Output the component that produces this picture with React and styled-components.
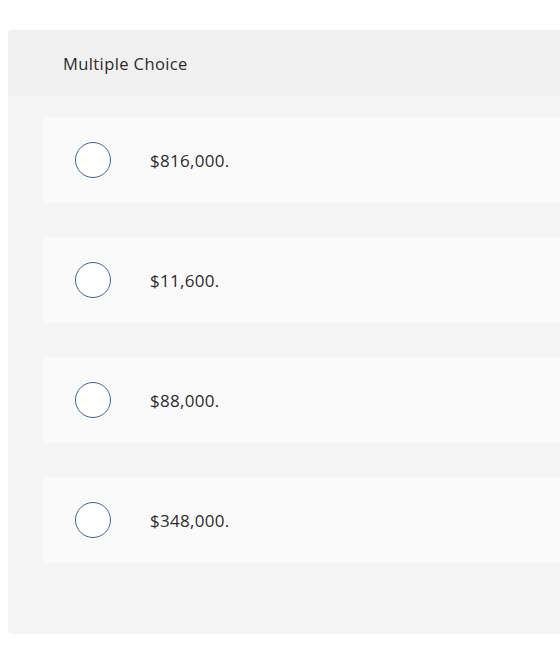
import React from "react";
import styled, { createGlobalStyle } from "styled-components";

const Global = createGlobalStyle`
  html, body { margin: 0; padding: 0; background: #ffffff; }
  body { font-family: "Open Sans", "Liberation Sans", Arial, sans-serif; color: #333; }
`;

const Page = styled.div`
  width: 560px;
  height: 649px;
  overflow: hidden;
  padding: 30px 0 0 8px;
  box-sizing: border-box;
`;

const Panel = styled.section`
  width: 620px;
  background: #f5f5f5;
  border-radius: 4px;
  overflow: hidden;
`;

const Header = styled.header`
  height: 66px;
  background: #f0f0f0;
  display: flex;
  align-items: center;
  padding-left: 55px;
  font-size: 16.5px;
  letter-spacing: 0.4px;
  color: #2b2b2b;
`;

const Options = styled.div`
  display: flex;
  flex-direction: column;
  gap: 34px;
  padding: 21px 0 71px 34px;
`;

const Option = styled.label`
  height: 86px;
  background: #fafafa;
  border-radius: 4px;
  display: flex;
  align-items: center;
  padding-left: 33px;
  gap: 39px;
  cursor: pointer;
`;

const Radio = styled.span`
  width: 36px;
  height: 36px;
  box-sizing: border-box;
  border-radius: 50%;
  border: 1.6px solid #3a659c;
  background: #ffffff;
  flex: none;
`;

const Text = styled.span`
  font-size: 17px;
  letter-spacing: 0.3px;
  color: #2b2b2b;
`;

const choices = ["$816,000.", "$11,600.", "$88,000.", "$348,000."];

export default function App() {
  return (
    <>
      <Global />
      <Page>
        <Panel>
          <Header>Multiple Choice</Header>
          <Options>
            {choices.map((c) => (
              <Option key={c}>
                <Radio />
                <Text>{c}</Text>
              </Option>
            ))}
          </Options>
        </Panel>
      </Page>
    </>
  );
}
